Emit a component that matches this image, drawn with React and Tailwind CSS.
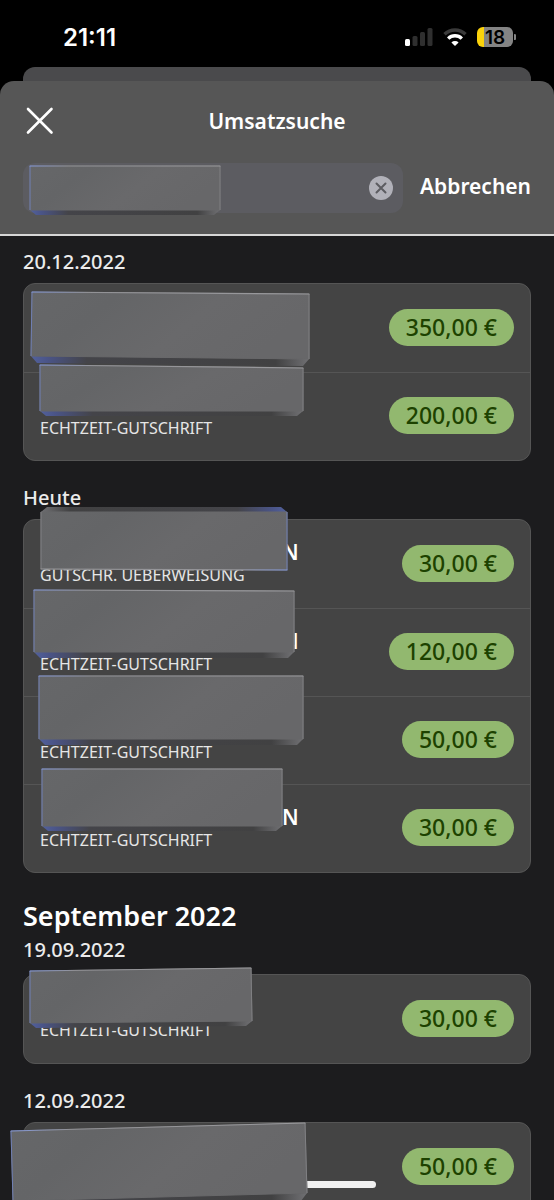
import { useState } from "react";

// Cover plates use coordinates relative to the row they sit in.
// corners: top-left, top-right, bottom-right, bottom-left of the face
const groups = [
  {
    date: "20.12.2022",
    items: [
      {
        id: 1,
        type: "",
        amount: "350,00 €",
        cover: { corners: [[8, 8], [285, 10], [285, 75], [7, 72]], depth: 7 },
      },
      {
        id: 2,
        type: "ECHTZEIT-GUTSCHRIFT",
        amount: "200,00 €",
        cover: { corners: [[16, -8], [279, -5], [279, 38], [16, 38]], depth: 5 },
      },
    ],
  },
  {
    date: "Heute",
    items: [
      {
        id: 3,
        nameEnd: "N",
        type: "GUTSCHR. UEBERWEISUNG",
        amount: "30,00 €",
        cover: {
          corners: [[17, -8], [263, -8], [263, 50], [17, 49]],
          depth: 5,
          flipped: true,
        },
      },
      {
        id: 4,
        nameEnd: "N",
        type: "ECHTZEIT-GUTSCHRIFT",
        amount: "120,00 €",
        cover: { corners: [[10, -19], [270, -18], [270, 43], [10, 43]], depth: 6 },
      },
      {
        id: 5,
        type: "ECHTZEIT-GUTSCHRIFT",
        amount: "50,00 €",
        cover: { corners: [[15, -21], [279, -21], [279, 42], [15, 42]], depth: 6 },
      },
      {
        id: 6,
        nameEnd: "N",
        type: "ECHTZEIT-GUTSCHRIFT",
        amount: "30,00 €",
        cover: { corners: [[18, -16], [258, -16], [258, 41], [18, 41]], depth: 5 },
      },
    ],
  },
  {
    month: "September 2022",
    date: "19.09.2022",
    items: [
      {
        id: 7,
        type: "ECHTZEIT-GUTSCHRIFT",
        amount: "30,00 €",
        cover: { corners: [[6, -4], [227, -7], [228, 46], [6, 48]], depth: 5 },
      },
    ],
  },
  {
    date: "12.09.2022",
    items: [
      {
        id: 8,
        type: "",
        amount: "50,00 €",
        cover: { corners: [[-13, 8], [281, 0], [283, 70], [-11, 78]], depth: 8 },
      },
    ],
  },
];

function Cover({ id, corners, depth, flipped }) {
  const [tl, tr, br, bl] = corners;
  const face = corners.map((p) => p.join(",")).join(" ");
  const bevel = flipped
    ? [tl, [tl[0] + 6, tl[1] - depth], [tr[0] - 6, tr[1] - depth], tr]
    : [bl, [bl[0] + 6, bl[1] + depth], [br[0] - 6, br[1] + depth], br];
  const blue = flipped ? [tr, br] : [tl, bl];
  const grey = flipped ? [tl, bl] : [tr, br];
  const lit = flipped ? [br, bl] : [tl, tr];

  return (
    <svg
      className="absolute inset-0 z-10 h-full w-full overflow-visible pointer-events-none"
      aria-hidden="true"
    >
      <defs>
        <linearGradient id={`face-${id}`} x1="0" y1="0" x2="1" y2="0.3">
          <stop offset="0" stopColor="#666769" />
          <stop offset="0.3" stopColor="#646567" />
          <stop offset="0.65" stopColor="#69696b" />
          <stop offset="1" stopColor="#676769" />
        </linearGradient>
        <linearGradient
          id={`bevel-${id}`}
          x1={flipped ? 1 : 0}
          x2={flipped ? 0 : 1}
          y1="0"
          y2="0"
        >
          <stop offset="0" stopColor="#52619c" />
          <stop offset="0.06" stopColor="#4a5487" />
          <stop offset="0.2" stopColor="#444449" />
          <stop offset="0.88" stopColor="#414142" />
          <stop offset="1" stopColor="#707073" />
        </linearGradient>
        <linearGradient
          id={`lit-${id}`}
          gradientUnits="userSpaceOnUse"
          x1={lit[0][0]}
          x2={lit[1][0]}
          y1="0"
          y2="0"
        >
          <stop offset="0" stopColor="#8499dc" />
          <stop offset="0.2" stopColor="#929296" />
          <stop offset="1" stopColor="#99999c" />
        </linearGradient>
      </defs>
      <polygon points={bevel.map((p) => p.join(",")).join(" ")} fill={`url(#bevel-${id})`} />
      <polygon
        points={face}
        fill={`url(#face-${id})`}
        stroke={`url(#face-${id})`}
        strokeWidth="1"
        strokeLinejoin="round"
      />
      <path d={`M${grey[0]} L${grey[1]}`} stroke="#808083" />
      <path d={`M${blue[0]} L${blue[1]}`} stroke="#7080b5" />
      <path
        d={`M${lit[0]} L${lit[1]}`}
        stroke={`url(#lit-${id})`}
        strokeWidth="1.2"
        strokeLinecap="round"
      />
    </svg>
  );
}

function StatusBar() {
  return (
    <div className="flex h-[67px] shrink-0 items-center justify-between pt-2 pr-[38px] pl-[63px]">
      <span className="font-['Inter',sans-serif] text-2xl font-semibold">21:11</span>
      <div className="flex items-center gap-[10px] pb-0.5">
        <svg width="28" height="18" viewBox="0 0 28 18">
          <rect x="0" y="11" width="5" height="7" rx="1.5" fill="#fff" />
          <rect x="7.5" y="8" width="5" height="10" rx="1.5" fill="#2f2f2f" />
          <rect x="15" y="4" width="5" height="14" rx="1.5" fill="#2f2f2f" />
          <rect x="22.5" y="0" width="5" height="18" rx="1.5" fill="#2f2f2f" />
        </svg>
        <svg width="24" height="18" viewBox="0 0 24 18" fill="none" strokeWidth="3.4">
          <path d="M1.5 6.3a15 15 0 0 1 21 0" stroke="#3a3a3a" />
          <path d="M5.2 10.6a9.7 9.7 0 0 1 13.6 0" stroke="#fff" />
          <path d="M12 18l-3.6-3.6a5.2 5.2 0 0 1 7.2 0z" fill="#fff" />
        </svg>
        <div className="flex items-center gap-px">
          <div className="flex h-5 w-9 items-center justify-center rounded-md bg-linear-to-r from-[#fbd20b] from-20% to-[#848484] to-20% pt-0.5 font-['Inter',sans-serif] text-[19px] leading-5 font-semibold text-black">
            18
          </div>
          <svg width="2" height="6" viewBox="0 0 2 6">
            <path d="M0 0a3 3 0 0 1 0 6z" fill="#848484" />
          </svg>
        </div>
      </div>
    </div>
  );
}

function SearchHeader() {
  const [query, setQuery] = useState("");

  return (
    <header className="shrink-0 rounded-t-[14px] border-b-2 border-[#d6d6d6] bg-[#565656] px-[23px] pb-[21px]">
      <div className="grid h-[82px] grid-cols-[32px_1fr_32px] items-center">
        <button type="button" aria-label="Schließen">
          <svg width="32" height="32" viewBox="0 0 32 32" stroke="#fff" strokeWidth="2.6" strokeLinecap="round">
            <path d="M5 3l23.5 23.5M28.5 3l-23.5 23.5" />
          </svg>
        </button>
        <h1 className="text-center text-[21px] font-semibold">Umsatzsuche</h1>
      </div>
      <div className="flex items-center gap-[17px]">
        <div className="relative flex h-[50px] flex-1 items-center rounded-xl bg-[#5c5c61] pr-[10px]">
          <input
            type="text"
            aria-label="Umsätze durchsuchen"
            className="h-full min-w-0 flex-1 bg-transparent px-3 text-xl outline-none"
            value={query}
            onChange={(e) => setQuery(e.target.value)}
          />
          <button type="button" aria-label="Eingabe löschen" onClick={() => setQuery("")}>
            <svg width="24" height="24" viewBox="0 0 24 24">
              <circle cx="12" cy="12" r="12" fill="#b1b1b9" />
              <path d="M7.5 7.5l9 9M16.5 7.5l-9 9" stroke="#5c5c61" strokeWidth="2" strokeLinecap="round" />
            </svg>
          </button>
          <Cover id="search" corners={[[7, 3], [197, 3], [197, 47], [7, 47]]} depth={5} />
        </div>
        <button type="button" className="pb-0.5 text-[21px] font-semibold">
          Abbrechen
        </button>
      </div>
    </header>
  );
}

function TransactionRow({ item }) {
  return (
    <li className="relative flex h-[88px] items-center justify-between border-t border-[#555555] px-4 pb-0.5 first:border-t-0">
      <div>
        <p className="h-6 pl-[242px] text-[21px] leading-6 font-semibold">{item.nameEnd}</p>
        <p className="h-[22px] text-base leading-[22px] text-[#e6e6e6]">{item.type}</p>
      </div>
      <span className="rounded-full bg-[#92b86f] px-[17px] text-[23px] leading-[37px] font-medium text-[#1d4200]">
        {item.amount}
      </span>
      <Cover id={item.id} {...item.cover} />
    </li>
  );
}

export default function App() {
  return (
    <div className="relative flex h-screen flex-col overflow-hidden bg-black font-['Noto_Sans',sans-serif] text-white">
      <StatusBar />
      <div className="mx-[23px] h-[14px] shrink-0 rounded-t-xl bg-[#4a4a4c]" />
      <SearchHeader />

      <main className="min-h-0 flex-1 overflow-y-auto bg-[#1c1c1e] px-[23px] pt-3 [scrollbar-width:none]">
        {groups.map((group) => (
          <section key={group.date} className="mb-[23px]">
            {group.month && (
              <h2 className="mb-[3px] pt-[3px] text-[27px] leading-[34px] font-semibold">{group.month}</h2>
            )}
            <h3
              className={`text-xl leading-7 font-medium text-[#ebebeb] ${group.month ? "mb-[10px]" : "mb-[7px]"}`}
            >
              {group.date}
            </h3>
            <ul className="rounded-xl border border-[#555555] bg-[#444444]">
              {group.items.map((item) => (
                <TransactionRow key={item.id} item={item} />
              ))}
            </ul>
          </section>
        ))}
      </main>

      {/* home indicator */}
      <div className="absolute bottom-3 left-1/2 h-[7px] w-[198px] -translate-x-1/2 rounded-full bg-[#f0f0f0]" />
    </div>
  );
}
